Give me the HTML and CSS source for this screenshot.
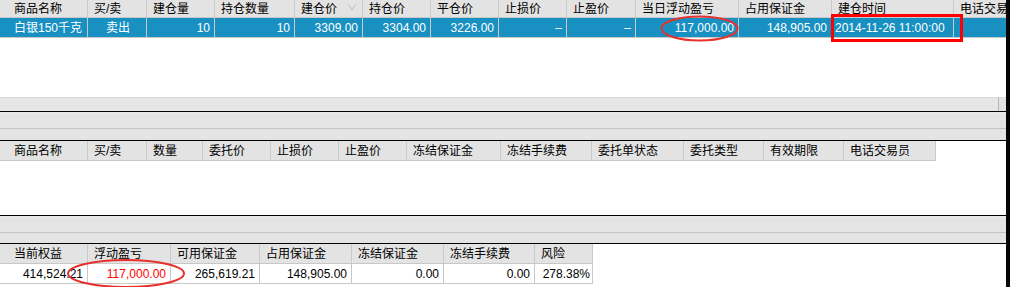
FILE: index.html
```html
<!DOCTYPE html>
<html lang="zh-CN">
<head>
<meta charset="utf-8">
<title>持仓</title>
<link rel="stylesheet" href="styles.css">
</head>
<body>
<div class="screen">
  <div class="main">
    <section class="panel panel-top">
      <div class="grid grid-pos head">
        <div class="c"></div>
        <div class="c">商品名称</div>
        <div class="c">买/卖</div>
        <div class="c">建仓量</div>
        <div class="c">持仓数量</div>
        <div class="c">建仓价<svg class="sort" width="8" height="7" viewBox="0 0 8 7"><polyline points="0.5,0.5 4,6 7.5,0.5" fill="none" stroke="#bdbdbd" stroke-width="1"/></svg></div>
        <div class="c">持仓价</div>
        <div class="c">平仓价</div>
        <div class="c">止损价</div>
        <div class="c">止盈价</div>
        <div class="c">当日浮动盈亏</div>
        <div class="c">占用保证金</div>
        <div class="c">建仓时间</div>
        <div class="c last">电话交易员</div>
      </div>
      <div class="grid grid-pos row selected">
        <div class="c"></div>
        <div class="c">白银150千克</div>
        <div class="c mid">卖出</div>
        <div class="c num">10</div>
        <div class="c num">10</div>
        <div class="c num">3309.00</div>
        <div class="c num">3304.00</div>
        <div class="c num">3226.00</div>
        <div class="c num">–</div>
        <div class="c num">–</div>
        <div class="c num">117,000.00</div>
        <div class="c num">148,905.00</div>
        <div class="c time">2014-11-26 11:00:00</div>
        <div class="c last"></div>
      </div>
      <div class="spacer"></div>
      <div class="hscroll"><div class="track"></div><div class="corner"></div></div>
    </section>

    <div class="splitter s1"><div class="sp-top"></div><div class="sp-bot"></div></div>

    <section class="panel panel-mid">
      <div class="grid grid-ord head">
        <div class="c"></div>
        <div class="c">商品名称</div>
        <div class="c">买/卖</div>
        <div class="c">数量</div>
        <div class="c">委托价</div>
        <div class="c">止损价</div>
        <div class="c">止盈价</div>
        <div class="c">冻结保证金</div>
        <div class="c">冻结手续费</div>
        <div class="c">委托单状态</div>
        <div class="c">委托类型</div>
        <div class="c">有效期限</div>
        <div class="c">电话交易员</div>
      </div>
    </section>

    <div class="splitter s2"><div class="sp-top"></div><div class="sp-bot"></div></div>

    <section class="panel panel-bot">
      <div class="grid grid-acc head">
        <div class="c"></div>
        <div class="c">当前权益</div>
        <div class="c">浮动盈亏</div>
        <div class="c">可用保证金</div>
        <div class="c">占用保证金</div>
        <div class="c">冻结保证金</div>
        <div class="c">冻结手续费</div>
        <div class="c">风险</div>
      </div>
      <div class="grid grid-acc row plain">
        <div class="c"></div>
        <div class="c num">414,524.21</div>
        <div class="c num red">117,000.00</div>
        <div class="c num">265,619.21</div>
        <div class="c num">148,905.00</div>
        <div class="c num">0.00</div>
        <div class="c num">0.00</div>
        <div class="c num tight">278.38%</div>
      </div>
    </section>
  </div>
  <div class="edge"></div>

  <svg class="marks" width="1010" height="287" viewBox="0 0 1010 287">
    <ellipse cx="699.5" cy="28.5" rx="38" ry="12" fill="none" stroke="#e8302c" stroke-width="2"/>
    <rect x="832.5" y="15.5" width="129" height="25" fill="none" stroke="#ff0000" stroke-width="3"/>
    <ellipse cx="126" cy="273.5" rx="58" ry="13.5" fill="none" stroke="#e8302c" stroke-width="2"/>
  </svg>
</div>
</body>
</html>
```

FILE: styles.css
```css
* {
  box-sizing: border-box;
  margin: 0;
  padding: 0;
}

html,
body {
  width: 1010px;
  height: 287px;
  overflow: hidden;
  background: #fff;
}

body {
  font-family: "Liberation Sans", "Noto Sans CJK SC", sans-serif;
  font-size: 12px;
  line-height: 1;
  color: #000;
}

.screen {
  position: relative;
  display: flex;
  width: 1010px;
  height: 287px;
}

.main {
  flex: 1;
  min-width: 0;
  display: flex;
  flex-direction: column;
}

.edge {
  width: 4px;
  background: #050505;
}

/* panels */
.panel {
  background: #fff;
  border-bottom: 1px solid #000;
  display: flex;
  flex-direction: column;
}

.panel-top {
  height: 112px;
}

.panel-mid {
  height: 75px;
}

.panel-bot {
  flex: 1;
  border-bottom: none;
}

.spacer {
  flex: 1;
}

.hscroll {
  height: 14px;
  display: flex;
  background: #e6e6e6;
  border-top: 1px solid #dadada;
}

.hscroll .track {
  flex: 1;
  border-right: 1px solid #b4b4b4;
}

.hscroll .corner {
  width: 7px;
  background: #e2e2e2;
}

/* splitters */
.splitter {
  background: #e4e4e4;
  border-bottom: 1px solid #000;
  display: flex;
  flex-direction: column;
}

.splitter .sp-top {
  height: 17px;
  border-bottom: 1px solid #c4c4c4;
  border-top: 2px solid #e9e9e9;
}

.s1 {
  height: 29px;
}

.s1 .sp-bot {
  height: 11px;
}

.s2 {
  height: 28px;
}

.s2 .sp-bot {
  height: 10px;
}

/* grids */
.grid {
  display: grid;
  justify-content: start;
}

.grid-pos {
  grid-template-columns: 8px 80px 59px 68px 80px 68px 68px 68px 68px 69px 103px 93px 122px 1fr;
}

.grid-ord {
  grid-template-columns: 8px 80px 59px 56px 68px 68px 68px 94px 91px 92px 80px 80px 92px;
}

.grid-acc {
  grid-template-columns: 8px 80px 83px 89px 92px 92px 91px 58px;
}

.c {
  display: flex;
  align-items: center;
  padding: 0 4px 0 6px;
  white-space: nowrap;
  overflow: hidden;
}

.num {
  justify-content: flex-end;
  padding: 0 4px 0 2px;
}

.mid {
  justify-content: center;
}

.time {
  padding-left: 3px;
}

.tight {
  padding-right: 2px;
}

.red {
  color: #ff0000;
}

/* header rows */
.head .c {
  background: #e3e3e3;
  border-right: 1px solid #c9c9c9;
  border-bottom: 1px solid #c8c8c8;
}

.head .c.last {
  border-right: none;
}

.panel-top .head .c {
  height: 18px;
}

.panel-mid .head .c,
.panel-bot .head .c {
  height: 20px;
}

.sort {
  margin-left: 11px;
  margin-top: -2px;
}

/* data rows */
.row .c {
  height: 20px;
}

.selected .c {
  background: #1890c2;
  color: #fff;
  border-right: 1px solid #cfc6c6;
  border-bottom: 1px solid #c8c8c8;
}

.selected .c.last {
  border-right: none;
}

.plain .c {
  background: #fff;
  border-right: 1px solid #c8c8c8;
  border-bottom: 1px solid #c8c8c8;
}

/* annotation overlay */
.marks {
  position: absolute;
  left: 0;
  top: 0;
  pointer-events: none;
}
```
